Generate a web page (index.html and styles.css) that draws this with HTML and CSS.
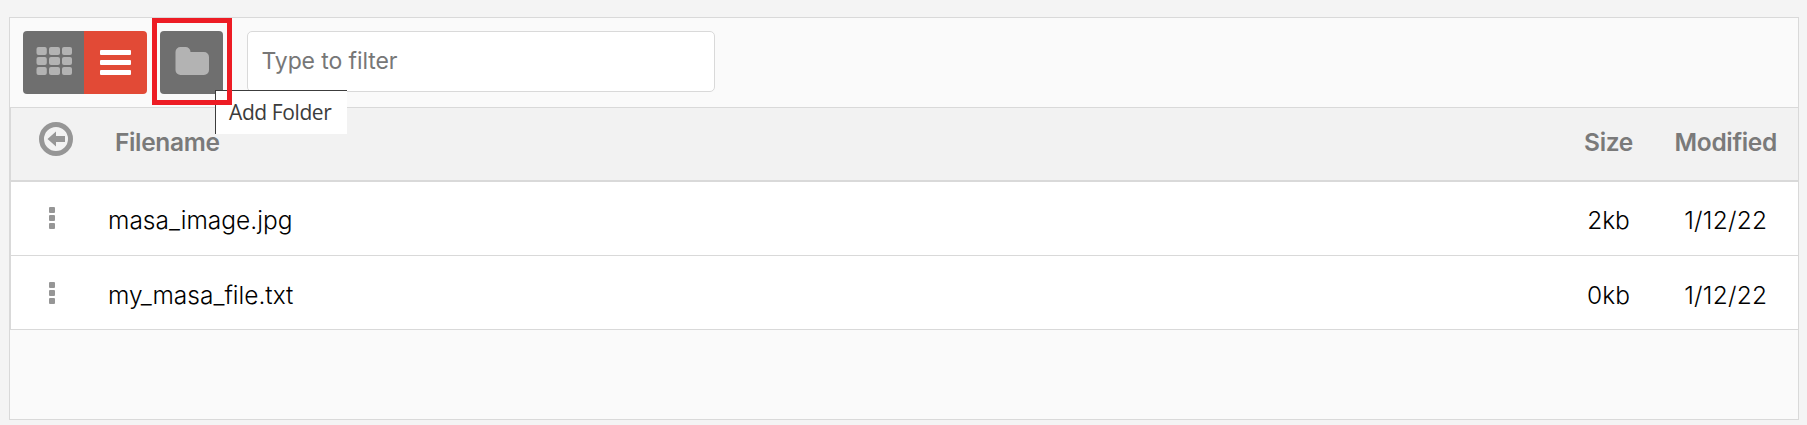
FILE: index.html
```html
<!DOCTYPE html>
<html lang="en">
<head>
<meta charset="utf-8">
<title>Files</title>
<link rel="stylesheet" href="styles.css">
</head>
<body>
<main class="panel">
  <div class="toolbar">
    <div class="btn-group">
      <button class="btn btn-grid" aria-label="Grid view">
        <svg width="36" height="28" viewBox="0 0 36 28" fill="#b3b3b3"><rect x="0.5" y="0" width="10.3" height="8" rx="2"/><rect x="13" y="0" width="11" height="8" rx="2"/><rect x="26" y="0" width="10" height="8" rx="2"/><rect x="0.5" y="10" width="10.3" height="8" rx="2"/><rect x="13" y="10" width="11" height="8" rx="2"/><rect x="26" y="10" width="10" height="8" rx="2"/><rect x="0.5" y="20" width="10.3" height="8" rx="2"/><rect x="13" y="20" width="11" height="8" rx="2"/><rect x="26" y="20" width="10" height="8" rx="2"/></svg>
      </button>
      <button class="btn btn-list" aria-label="List view">
        <svg width="31" height="25" viewBox="0 0 31 25" fill="#fff"><rect width="31" height="5" rx="1"/><rect y="10" width="31" height="5" rx="1"/><rect y="20" width="31" height="5" rx="1"/></svg>
      </button>
    </div>
    <button class="btn btn-folder" aria-label="Add Folder">
      <svg width="34" height="28" viewBox="0 0 34 28" fill="#b3b3b3"><path d="M5.5 0h5a5 5 0 0 1 5 5h13.500a5 5 0 0 1 5 5v13a5 5 0 0 1-5 5H5.500a5 5 0 0 1-5-5V5a5 5 0 0 1 5-5z"/></svg>
    </button>
    <input class="filter" type="text" placeholder="Type to filter">
  </div>
  <div class="table">
    <div class="row head">
      <span class="back"><svg width="34" height="34" viewBox="0 0 34 34"><circle cx="17" cy="17" r="14.5" fill="none" stroke="#969696" stroke-width="5"/><path d="M8.5 17l8.500-7.500v4.500h9v6h-9v4.500z" fill="#969696"/></svg></span>
      <span class="name">Filename</span><span class="size">Size</span><span class="date">Modified</span>
    </div>
    <div class="row">
      <span class="dots"><svg width="6" height="22" viewBox="0 0 6 22" fill="#969696"><rect width="6" height="6" rx="1"/><rect y="8" width="6" height="6" rx="1"/><rect y="16" width="6" height="6" rx="1"/></svg></span>
      <span class="name">masa_image.jpg</span><span class="size">2kb</span><span class="date">1/12/22</span>
    </div>
    <div class="row last">
      <span class="dots"><svg width="6" height="22" viewBox="0 0 6 22" fill="#969696"><rect width="6" height="6" rx="1"/><rect y="8" width="6" height="6" rx="1"/><rect y="16" width="6" height="6" rx="1"/></svg></span>
      <span class="name">my_masa_file.txt</span><span class="size">0kb</span><span class="date">1/12/22</span>
    </div>
  </div>
</main>
<div class="tooltip">Add Folder</div>
<div class="highlight"></div>
</body>
</html>
```
FILE: styles.css
```css
* { box-sizing: border-box; }
body { margin: 0; height: 425px; padding: 17px 8px 5px 9px; background: #f4f4f4; font-family: Inter, "Liberation Sans", sans-serif; font-size: 24.5px; color: #000; overflow: hidden; }
svg { display: block; }
.panel { height: 403px; border: 1px solid #d9d9d9; background: #fafafa; }
.toolbar { display: flex; align-items: flex-start; height: 89px; padding: 13px 0 0 13px; }
.btn-group { display: flex; margin-right: 13px; border-radius: 4px; overflow: hidden; }
.btn { display: flex; align-items: flex-start; height: 63px; margin: 0; padding: 16px 0 0; border: 0; background: #6f6f6f; }
.btn-grid { width: 61px; padding-left: 13px; }
.btn-list { width: 63px; padding: 19px 0 0 16px; background: #e24a36; }
.btn-folder { width: 63px; padding-left: 15px; border-radius: 4px; }
.filter { width: 468px; height: 61px; margin: 0 0 0 24px; padding: 0 14px 2px 13.5px; border: 1px solid #d9d9d9; border-radius: 5px; background: #fff; font: 400 23px Inter, "Liberation Sans", sans-serif; letter-spacing: -0.1px; }
.filter::placeholder { color: #777; opacity: 1; }
.table { border-top: 1px solid #d9d9d9; border-left: 1px solid #d9d9d9; }
.row { display: grid; grid-template-columns: 97px 1fr 90px 144.5px; height: 74px; border-bottom: 1px solid #d9d9d9; background: #fff; line-height: 30px; font-weight: 330; }
.head { border-bottom-width: 2px; background: #f2f2f2; color: #7a7a7a; font-weight: 600; letter-spacing: -0.35px; }
.name, .size, .date { padding-top: 23px; }
.date { letter-spacing: 0.25px; }
.head .date { letter-spacing: -0.35px; }
.head .name { padding: 19px 0 0 7px; }
.head .size, .head .date { padding-top: 19px; }
.size, .date { text-align: center; }
.back { padding: 14px 0 0 28px; }
.dots { padding: 25px 0 0 38px; }
.last .name, .last .size, .last .date { padding-top: 24px; }
.last .dots { padding-top: 26px; }
.tooltip { position: absolute; left: 215px; top: 90px; width: 132px; height: 44px; padding: 0 0 0 13px; border-top: 1px solid #3c3c3c; border-left: 1px solid #3c3c3c; background: #fff; color: #3c3c3c; font: 400 21px/42px "Open Sans", "Noto Sans", sans-serif; letter-spacing: -0.4px; white-space: nowrap; }
.highlight { position: absolute; left: 152px; top: 18px; width: 80px; height: 87px; border: 5px solid #ed1c24; }
```
